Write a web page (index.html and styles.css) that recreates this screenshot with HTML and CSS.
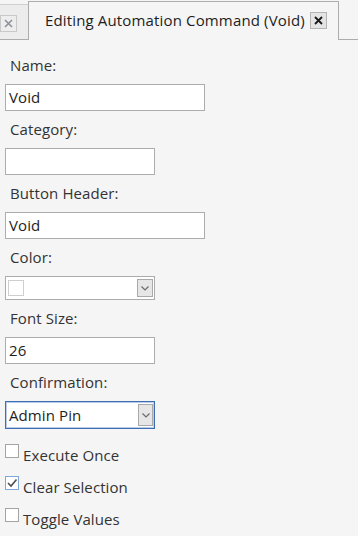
FILE: index.html
```html
<!DOCTYPE html>
<html lang="en">
<head>
    <meta charset="UTF-8">
    <meta name="viewport" content="width=device-width, initial-scale=1.0">
    <title>Editing Automation Command</title>
    <link rel="stylesheet" href="styles.css">
</head>
<body>
    <!-- Tab strip -->
    <div class="tabs">
        <div class="tab tab-inactive">
            <span class="tab-close">
                <svg width="9" height="9" viewBox="0 0 9 9"><path d="M1 1 L8 8 M8 1 L1 8" stroke="#8c9299" stroke-width="1.6"/></svg>
            </span>
        </div>
        <div class="tab tab-active">
            <span class="tab-title">Editing Automation Command (Void)</span>
            <span class="tab-close active-close">
                <svg width="9" height="9" viewBox="0 0 9 9"><path d="M1 1 L8 8 M8 1 L1 8" stroke="#1a1a1a" stroke-width="1.8"/></svg>
            </span>
        </div>
    </div>

    <!-- Editor form -->
    <div class="editor">
        <div class="field">
            <label>Name:</label>
            <div class="text-box wide">Void</div>
        </div>
        <div class="field">
            <label>Category:</label>
            <div class="text-box"></div>
        </div>
        <div class="field">
            <label>Button Header:</label>
            <div class="text-box wide">Void</div>
        </div>
        <div class="field">
            <label>Color:</label>
            <div class="combo color-combo">
                <span class="swatch"></span>
                <span class="combo-arrow">
                    <svg width="8" height="5" viewBox="0 0 8 5"><path d="M0.5 0.5 L4 4 L7.5 0.5" fill="none" stroke="#6b6b6b" stroke-width="1.2"/></svg>
                </span>
            </div>
        </div>
        <div class="field">
            <label>Font Size:</label>
            <div class="text-box">26</div>
        </div>
        <div class="field">
            <label>Confirmation:</label>
            <div class="combo focused">
                <span class="combo-text">Admin Pin</span>
                <span class="combo-arrow">
                    <svg width="8" height="5" viewBox="0 0 8 5"><path d="M0.5 0.5 L4 4 L7.5 0.5" fill="none" stroke="#6b6b6b" stroke-width="1.2"/></svg>
                </span>
            </div>
        </div>

        <div class="checks">
            <div class="check">
                <span class="box"></span>
                <span>Execute Once</span>
            </div>
            <div class="check">
                <span class="box checked">
                    <svg width="12" height="12" viewBox="0 0 12 12"><path d="M2 6 L5 9 L10.5 2.5" fill="none" stroke="#4d4d4d" stroke-width="1.6"/></svg>
                </span>
                <span>Clear Selection</span>
            </div>
            <div class="check">
                <span class="box"></span>
                <span>Toggle Values</span>
            </div>
        </div>
    </div>
</body>
</html>
```

FILE: styles.css
```css
/* Global Styles */
* {
    margin: 0;
    padding: 0;
    box-sizing: border-box;
}

body {
    background: #f5f5f5;
    font-family: 'Open Sans', 'Noto Sans', sans-serif;
    font-size: 15px;
    letter-spacing: 0.1px;
    color: #333;
}

/* Tab strip */
.tabs {
    display: flex;
    align-items: flex-end;
    height: 40px;
    border-bottom: 1px solid #acacac;
}

.tab {
    display: flex;
    align-items: flex-start;
}

.tab-inactive {
    width: 28px;
    height: 35px;
    background: #ececec;
    border-top: 1px solid #d0d0d0;
    justify-content: flex-end;
    padding-right: 11px;
    padding-top: 10px;
}

.tab-active {
    width: 311px;
    height: 39px;
    margin-bottom: -1px;
    background: #f5f5f5;
    border: 1px solid #acacac;
    border-bottom: none;
    padding-left: 16px;
    padding-top: 8px;
}

.tab-title {
    color: #1e1e1e;
    line-height: 20px;
    letter-spacing: 0.15px;
    white-space: nowrap;
}

.tab-close {
    display: flex;
    align-items: center;
    justify-content: center;
    width: 17px;
    height: 17px;
    border: 1px solid #c8c8c8;
    background: #ededed;
}

.active-close {
    margin-left: 5px;
    margin-top: 2px;
    border-color: #b4b4b4;
    background: #e4e4e4;
}

/* Editor form */
.editor {
    padding: 15px 0 0 5px;
}

.field {
    display: flex;
    flex-direction: column;
    align-items: flex-start;
    margin-bottom: 8px;
}

.field label {
    display: block;
    padding-left: 5px;
    line-height: 20px;
    margin-bottom: 9px;
    color: #333;
}

.text-box {
    width: 150px;
    height: 27px;
    background: #fff;
    border: 1px solid #acacac;
    padding-left: 3px;
    line-height: 25px;
    color: #1e1e1e;
}

.text-box.wide {
    width: 200px;
}

.combo {
    display: flex;
    align-items: center;
    justify-content: space-between;
    width: 150px;
    height: 28px;
    background: #fff;
    border: 1px solid #acacac;
    padding: 0 1px 0 3px;
    color: #1e1e1e;
}

.color-combo {
    height: 24px;
    padding-left: 2px;
}

.combo.focused {
    border-color: #3d6db5;
    box-shadow: inset 0 0 0 1px #b9cce8;
}

.swatch {
    width: 16px;
    height: 16px;
    border: 1px solid #cfcfcf;
    background: #fff;
}

.combo-arrow {
    display: flex;
    align-items: center;
    justify-content: center;
    width: 16px;
    height: 18px;
    background: #e6e6e6;
    border: 1px solid #a9a9a9;
}

.focused .combo-arrow {
    width: 15px;
    height: 22px;
}

/* Check boxes */
.checks {
    padding-top: 8px;
}

.check {
    display: flex;
    align-items: flex-start;
    height: 20px;
    line-height: 20px;
    margin-bottom: 12px;
    color: #333;
}

.box {
    display: flex;
    align-items: center;
    justify-content: center;
    width: 14px;
    height: 14px;
    margin-top: -1px;
    margin-right: 4px;
    background: #fff;
    border: 1px solid #a4a4a4;
}

.box.checked {
    border-color: #7ea8d8;
}
```
